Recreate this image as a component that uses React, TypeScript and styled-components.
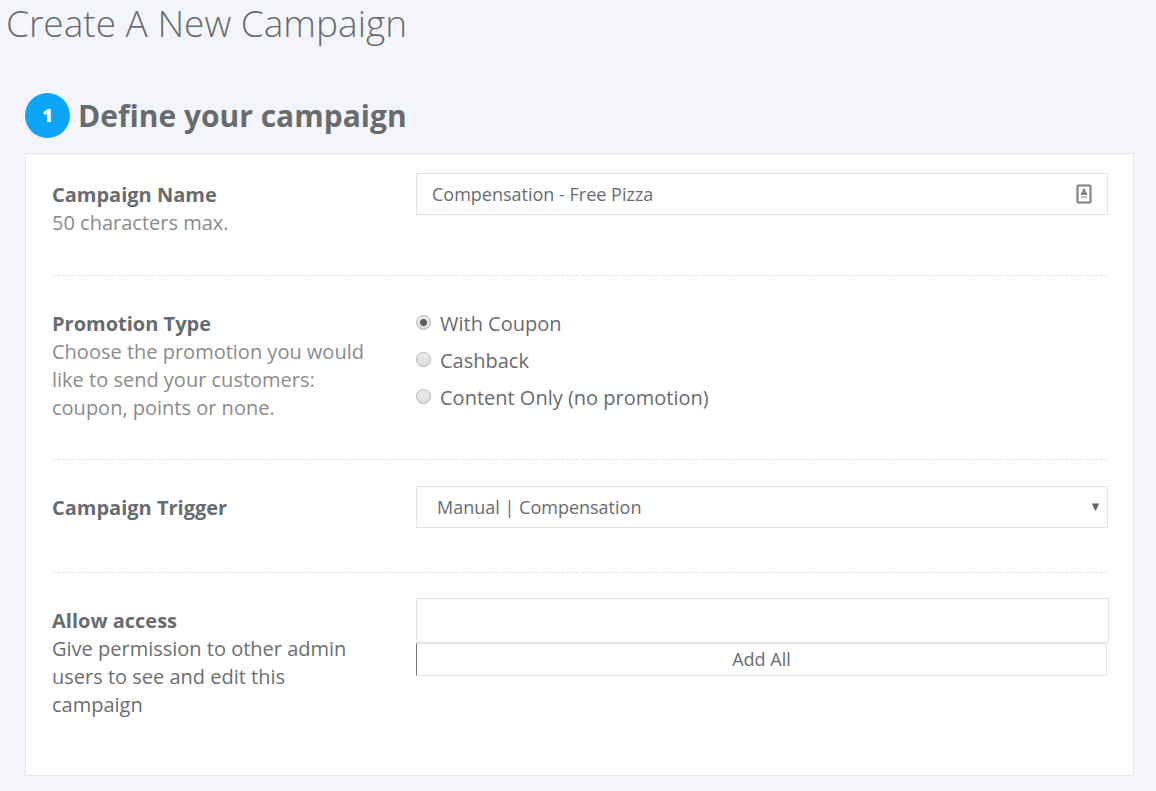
import React, { useState } from "react";
import styled, { createGlobalStyle, css } from "styled-components";

const GlobalStyle = createGlobalStyle`
  *, *::before, *::after { box-sizing: border-box; }
  body {
    margin: 0;
    background: #f4f5fa;
    color: #696c6f;
    font-family: "Open Sans", "Noto Sans", sans-serif;
    font-size: 20px;
    line-height: 28px;
  }
`;

const Page = styled.main`
  padding: 0 22px 15px 25px;
`;

const PageTitle = styled.h1`
  margin: 0 0 47px -19px;
  font-size: 37px;
  font-weight: 300;
  line-height: 46px;
`;

const StepHeader = styled.header`
  display: flex;
  align-items: center;
  gap: 8px;
  margin-bottom: 15px;
`;

const StepNumber = styled.span`
  display: grid;
  place-items: center;
  flex: none;
  width: 45px;
  height: 45px;
  padding-bottom: 2px;
  border-radius: 50%;
  background: #0da5f5;
  color: #fff;
  font-size: 18px;
  font-weight: 800;
`;

const StepTitle = styled.h2`
  margin: 0;
  font-size: 30px;
  font-weight: 700;
  line-height: 45px;
`;

const Card = styled.form`
  padding: 0 25px 0 26px;
  border: 1px solid #e5e7ec;
  background: #fff;
`;

const Row = styled.div`
  display: grid;
  grid-template-columns: 364px minmax(0, 1fr);
  align-items: start;
  min-height: 113px;
  padding: 26px 0 37px;
  border: 0 dashed #e7e7e7;
  border-bottom-width: 1px;

  &:first-child {
    padding: 19px 0 38px;
  }

  &:last-child {
    padding-bottom: 56px;
    border-bottom: 0;
  }
`;

const Caption = styled.div`
  padding: 8px 50px 0 0;
`;

const labelText = css`
  display: block;
  font-weight: 700;
`;

const Label = styled.label`
  ${labelText}
`;

const GroupLabel = styled.span`
  ${labelText}
`;

const Hint = styled.p<{ $strong?: boolean }>`
  margin: 0;
  color: ${(p) => (p.$strong ? "#6c6e70" : "#8b8b8b")};
`;

const Field = styled.div`
  position: relative;
`;

const UserPicker = styled.div`
  margin: -1px -1px 0 0;
`;

const boxed = css`
  display: block;
  width: 100%;
  border: 1px solid #e4e4e4;
  border-radius: 0;
  background: #fff;
  color: #696c6f;
  font-family: inherit;
  font-size: 18px;
`;

const TextInput = styled.input`
  ${boxed}
  height: 42px;
  padding: 0 48px 0 15px;
`;

const Select = styled.select`
  ${boxed}
  height: 42px;
  padding: 0 32px 0 20px;
  appearance: none;
`;

const ContactIcon = styled.svg`
  position: absolute;
  top: 11px;
  right: 16px;
`;

const ArrowIcon = styled.svg`
  position: absolute;
  top: 17px;
  right: 9px;
  pointer-events: none;
`;

const Options = styled.div`
  display: grid;
  gap: 9px;
  padding-top: 8px;
`;

const Option = styled.label`
  display: flex;
  align-items: center;
  gap: 9px;
`;

const Radio = styled.input`
  appearance: none;
  flex: none;
  width: 15px;
  height: 15px;
  margin: 0 0 3px;
  border: 1px solid #b4b4b4;
  border-radius: 50%;
  background: linear-gradient(#ededed, #dcdcdc);

  &:checked {
    background:
      radial-gradient(circle, #5c5c5c 3px, transparent 4px),
      linear-gradient(#ededed, #dcdcdc);
  }
`;

const UsersInput = styled.input`
  ${boxed}
  height: 45px;
  padding: 0 15px;
`;

const AddAllButton = styled.button`
  ${boxed}
  width: calc(100% - 2px);
  height: 33px;
  padding: 0 0 2px;
  border-left-color: #777;
  line-height: 28px;
`;

const promotions = ["With Coupon", "Cashback", "Content Only (no promotion)"];

export default function App() {
  const [name, setName] = useState("Compensation - Free Pizza");
  const [promotion, setPromotion] = useState(promotions[0]);

  return (
    <>
      <GlobalStyle />
      <Page>
        <PageTitle>Create A New Campaign</PageTitle>
        <StepHeader>
          <StepNumber>1</StepNumber>
          <StepTitle>Define your campaign</StepTitle>
        </StepHeader>
        <Card>
          <Row>
            <Caption>
              <Label htmlFor="name">Campaign Name</Label>
              <Hint id="name-hint">50 characters max.</Hint>
            </Caption>
            <Field>
              <TextInput
                id="name"
                type="text"
                maxLength={50}
                aria-describedby="name-hint"
                value={name}
                onChange={(e) => setName(e.target.value)}
              />
              <ContactIcon width="16" height="20" viewBox="0 0 16 20" aria-hidden="true">
                <rect x="1.5" y="1.5" width="13" height="17" rx="1" fill="#fff" stroke="#c9c9c9" strokeWidth="3" />
                <rect x="1.5" y="1.5" width="13" height="17" rx="1" fill="none" stroke="#858585" strokeWidth="1.6" />
                <path d="M8 4L9.500 6V7.500L11 9V11H5V9L6.500 7.500V6Z" fill="#808080" />
                <path d="M5 12H11V14H5Z" fill="#c0c0c0" />
              </ContactIcon>
            </Field>
          </Row>
          <Row role="radiogroup" aria-labelledby="promotion-label">
            <Caption>
              <GroupLabel id="promotion-label">Promotion Type</GroupLabel>
              <Hint>Choose the promotion you would like to send your customers: coupon, points or none.</Hint>
            </Caption>
            <Options>
              {promotions.map((option) => (
                <Option key={option}>
                  <Radio
                    type="radio"
                    name="promotion"
                    checked={promotion === option}
                    onChange={() => setPromotion(option)}
                  />
                  {option}
                </Option>
              ))}
            </Options>
          </Row>
          <Row>
            <Caption>
              <Label htmlFor="trigger">Campaign Trigger</Label>
            </Caption>
            <Field>
              <Select id="trigger">
                <option>Manual | Compensation</option>
              </Select>
              <ArrowIcon width="7" height="8" viewBox="0 0 7 8" aria-hidden="true">
                <path d="M0 0.500H7L4 7.500H3Z" fill="#606365" />
              </ArrowIcon>
            </Field>
          </Row>
          <Row>
            <Caption>
              <Label htmlFor="users">Allow access</Label>
              <Hint $strong id="users-hint">
                Give permission to other admin users to see and edit this campaign
              </Hint>
            </Caption>
            <UserPicker>
              <UsersInput id="users" type="text" aria-describedby="users-hint" />
              <AddAllButton type="button">Add All</AddAllButton>
            </UserPicker>
          </Row>
        </Card>
      </Page>
    </>
  );
}
